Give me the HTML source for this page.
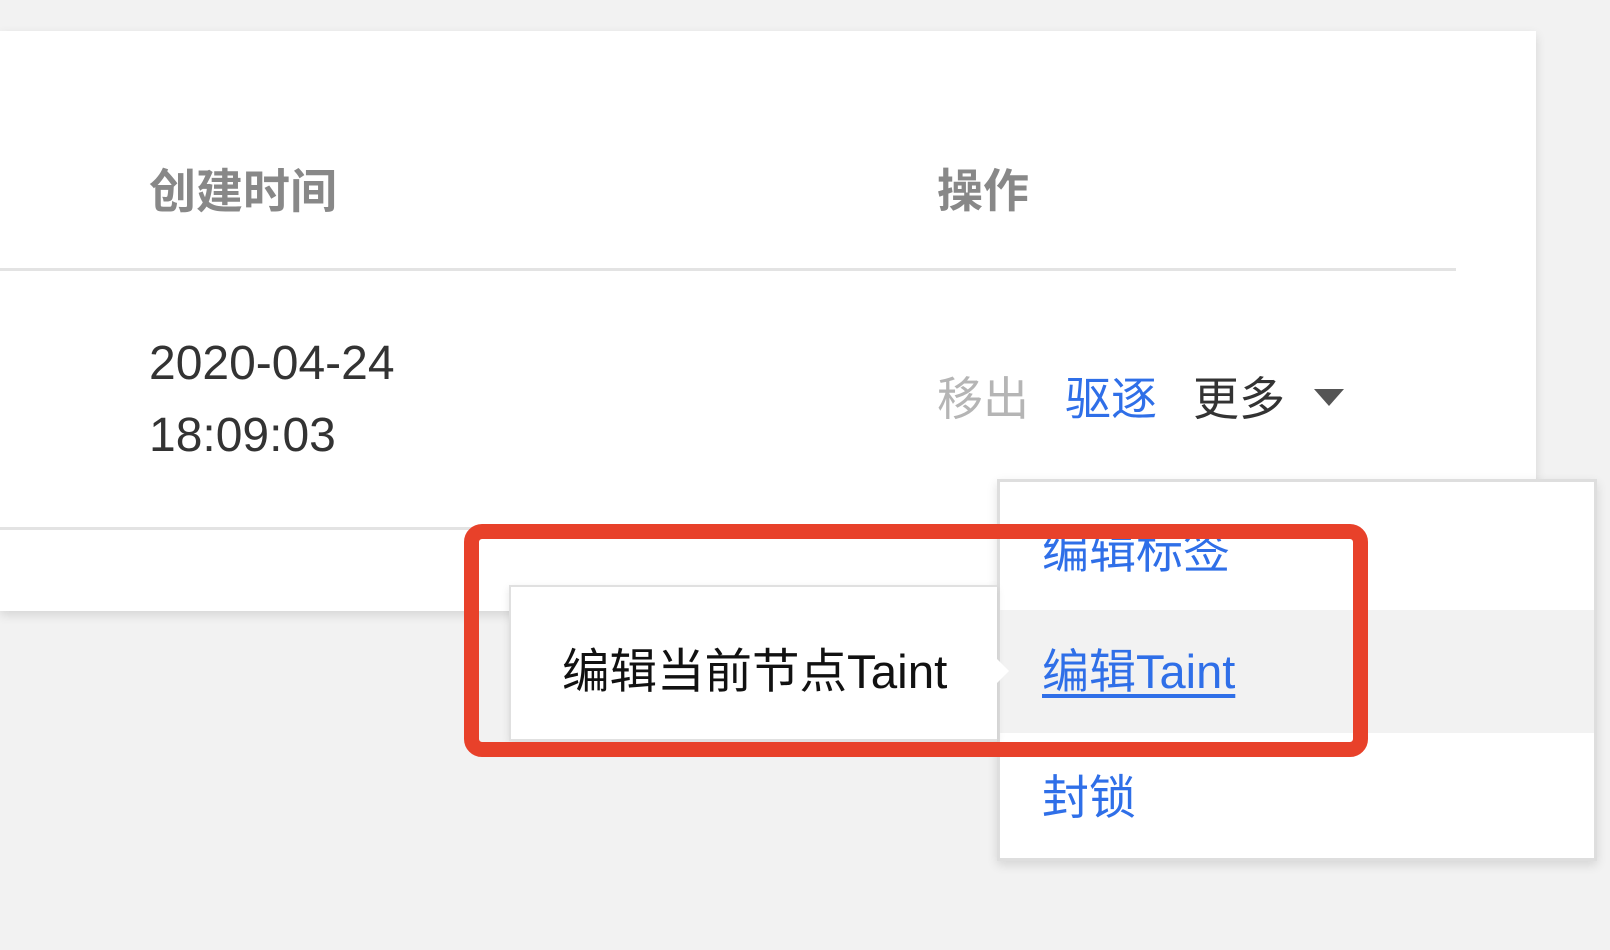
<!DOCTYPE html>
<html><head><meta charset="utf-8"><style>
body{margin:0;width:1610px;height:950px;background:#f2f2f2;position:relative;overflow:hidden;font-family:"Liberation Sans","Noto Sans CJK SC",sans-serif}
.a{position:absolute;white-space:nowrap;line-height:1}
.card{position:absolute;left:0;top:31px;width:1536px;height:580px;background:#fff;box-shadow:0 4px 10px rgba(0,0,0,.12)}
</style></head><body>
<div class="card"></div>
<div class="a" style="left:149px;top:168px;font-size:47px;font-weight:bold;color:#888">创建时间</div>
<div class="a" style="left:937px;top:168px;font-size:46px;font-weight:bold;color:#888">操作</div>
<div class="a" style="left:0;top:268px;width:1456px;height:3px;background:#e3e3e3"></div>
<div class="a" style="left:149px;top:340px;font-size:48px;color:#333">2020-04-24</div>
<div class="a" style="left:149px;top:412px;font-size:48px;color:#333">18:09:03</div>
<div class="a" style="left:937px;top:376px;font-size:46px;color:#b5b5b5">移出</div>
<div class="a" style="left:1065px;top:376px;font-size:46px;color:#2f6fe8">驱逐</div>
<div class="a" style="left:1193px;top:376px;font-size:46px;color:#333">更多</div>
<div class="a" style="left:1314px;top:389px;width:0;height:0;border-left:15px solid transparent;border-right:15px solid transparent;border-top:17px solid #555"></div>
<div class="a" style="left:0;top:527px;width:520px;height:3px;background:#e3e3e3"></div>
<!-- dropdown -->
<div class="a" style="left:997px;top:479px;width:594px;height:376px;background:#fff;border:3px solid #dedede;box-shadow:0 4px 10px rgba(0,0,0,.12)">
 <div class="a" style="left:0;top:128px;width:594px;height:123px;background:#f2f2f2"></div>
 <div class="a" style="left:42px;top:46px;font-size:47px;color:#2f6fe8">编辑标签</div>
 <div class="a" style="left:42px;top:166px;font-size:47px;color:#2f6fe8;text-decoration:underline;text-underline-offset:6px">编辑Taint</div>
 <div class="a" style="left:42px;top:292px;font-size:47px;color:#2f6fe8">封锁</div>
</div>
<!-- tooltip -->
<div class="a" style="left:509px;top:585px;width:486px;height:152px;background:#fff;border:2px solid #e0e0e0;border-right:none;box-shadow:0 3px 8px rgba(0,0,0,.1)">
 <div class="a" style="left:51px;top:62px;font-size:47.5px;color:#111">编辑当前节点Taint</div>
</div>
<div class="a" style="left:993px;top:655px;width:0;height:0;border-top:16px solid transparent;border-bottom:16px solid transparent;border-left:16px solid #fff"></div>
<!-- red box -->
<div class="a" style="left:464px;top:524px;width:874px;height:203px;border:15px solid #e8412a;border-radius:18px"></div>
</body></html>
